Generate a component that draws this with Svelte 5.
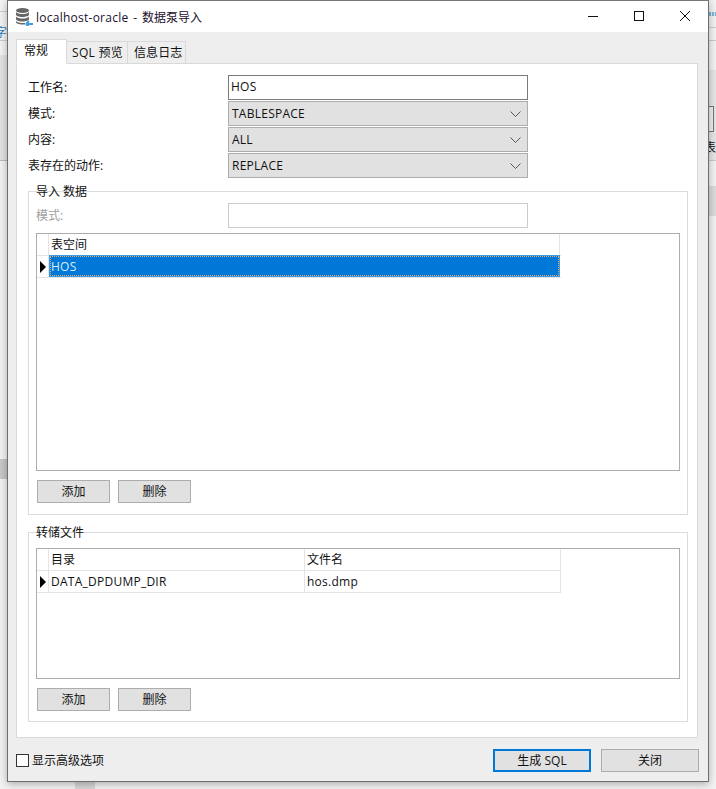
<script lang="ts">
  const options = [
    { label: '模式:', value: 'TABLESPACE' },
    { label: '内容:', value: 'ALL' },
    { label: '表存在的动作:', value: 'REPLACE' },
  ];
  const tabs = ['常规', 'SQL 预览', '信息日志'];
</script>

<div class="desktop">
  <!-- bits of the app behind the dialog -->
  <div class="backdrop">
    <span class="peek left-line" style="top: 11px"></span>
    <span class="peek left-line" style="top: 40px"></span>
    <span class="peek-glyph">字</span>
    <span class="peek left-panel"></span>
    <span class="peek left-band"></span>
    <span class="peek bottom-band"></span>
    <span class="peek right-line" style="top: 27px"></span>
    <span class="peek right-line" style="top: 40px"></span>
    <span class="peek right-dots"></span>
    <span class="peek right-panel"></span>
    <span class="peek right-box"></span>
    <span class="peek-right">表</span>
    <span class="peek right-line" style="top: 160px"></span>
    <span class="peek right-band"></span>
  </div>

  <div class="window">
    <header class="titlebar">
      <svg class="app-icon" width="19" height="19" viewBox="0 0 19 19">
        <ellipse cx="7.500" cy="3.500" rx="6.500" ry="2.500" fill="#666" />
        <path d="M1 5v2.500C1 9 4 10 7.500 10S14 9 14 7.500V5c-1 1.500-3.500 2-6.500 2S2 6.500 1 5z" fill="#666" />
        <path d="M1 9.500V12c0 1.500 3 2.500 6.500 2.500S14 13.500 14 12V9.500c-1 1.500-3.500 2-6.500 2S2 11 1 9.500z" fill="#666" />
        <path d="M1 14v1c0 1.500 3 2.500 6.500 2.500H10v-1.500c-4 .2-7.500-.5-9-2z" fill="#666" />
        <path d="M11 17h7M11 17l3-3M11 17l3 3" stroke="#3d9be0" stroke-width="2" fill="none" />
      </svg>
      <span class="title"><span class="latin">localhost-oracle -</span> 数据泵导入</span>
      <div class="controls">
        <svg width="12" height="12" viewBox="0 0 12 12"><path d="M1 6.500h10" stroke="#111" /></svg>
        <svg width="12" height="12" viewBox="0 0 12 12"><rect x="1.500" y="1.500" width="9" height="9" fill="none" stroke="#111" /></svg>
        <svg width="12" height="12" viewBox="0 0 12 12"><path d="M1 1l10 10M11 1L1 11" stroke="#111" /></svg>
      </div>
    </header>

    <div class="body">
      <div class="tabs">
        {#each tabs as tab, i}
          <div class="tab" class:active={i === 0}>{tab}</div>
        {/each}
      </div>

      <section class="panel">
        <div class="form">
          <div class="row">
            <span class="label">工作名:</span>
            <div class="input latin">HOS</div>
          </div>
          {#each options as opt}
            <div class="row">
              <span class="label">{opt.label}</span>
              <div class="select">
                <span class="latin">{opt.value}</span>
                <svg width="11" height="6" viewBox="0 0 11 6"><path d="M.5.500l5 5 5-5" fill="none" stroke="#555" /></svg>
              </div>
            </div>
          {/each}
        </div>

        <fieldset class="group first">
          <legend>导入 数据</legend>
          <div class="row disabled">
            <span class="label">模式:</span>
            <div class="input off"></div>
          </div>
          <div class="grid tall">
            <div class="grid-row head">
              <div class="rowhead"></div>
              <div class="cell single">表空间</div>
            </div>
            <div class="grid-row">
              <div class="rowhead"><i class="arrow"></i></div>
              <div class="cell single selected"><span class="latin">HOS</span></div>
            </div>
          </div>
          <div class="buttons">
            <button>添加</button>
            <button>删除</button>
          </div>
        </fieldset>

        <fieldset class="group second">
          <legend>转储文件</legend>
          <div class="grid short">
            <div class="grid-row head">
              <div class="rowhead"></div>
              <div class="cell dir">目录</div>
              <div class="cell file">文件名</div>
            </div>
            <div class="grid-row">
              <div class="rowhead"><i class="arrow"></i></div>
              <div class="cell dir latin">DATA_DPDUMP_DIR</div>
              <div class="cell file latin">hos.dmp</div>
            </div>
          </div>
          <div class="buttons">
            <button>添加</button>
            <button>删除</button>
          </div>
        </fieldset>
      </section>

      <footer class="footer">
        <label class="check"><i class="box"></i>显示高级选项</label>
        <div class="actions">
          <button class="wide primary">生成 SQL</button>
          <button class="wide">关闭</button>
        </div>
      </footer>
    </div>
  </div>
</div>

<style>
  :global(body) {
    margin: 0;
    font-family: "Open Sans", "Noto Sans CJK SC", sans-serif;
    font-size: 12px;
    color: #111;
  }

  .latin {
    letter-spacing: 0.25px;
  }

  .desktop {
    position: relative;
    width: 716px;
    height: 789px;
    overflow: hidden;
    background: #f3f3f3;
  }

  .backdrop {
    position: absolute;
    inset: 0;
  }

  .peek {
    position: absolute;
  }

  .left-line {
    left: 0;
    width: 7px;
    height: 1px;
    background: #ccc;
  }

  .left-panel {
    left: 0;
    top: 55px;
    width: 7px;
    height: 106px;
    background: #e4e4e4;
    border-bottom: 1px solid #bbb;
    box-sizing: border-box;
  }

  .left-band {
    left: 0;
    top: 459px;
    width: 7px;
    height: 20px;
    background: #c8c8c8;
  }

  .bottom-band {
    left: 75px;
    top: 780px;
    width: 20px;
    height: 9px;
    background: #d8d8d8;
  }

  .right-line {
    left: 708px;
    width: 8px;
    height: 1px;
    background: #ccc;
  }

  .right-dots {
    left: 709px;
    top: 12px;
    width: 7px;
    height: 4px;
    background: repeating-linear-gradient(90deg, #7db4dc 0 2px, #e8e8e8 2px 3px);
  }

  .right-panel {
    left: 708px;
    top: 70px;
    width: 8px;
    height: 90px;
    background: #e6e6e6;
  }

  .right-box {
    left: 708px;
    top: 106px;
    width: 6px;
    height: 26px;
    box-sizing: border-box;
    border: 1px solid #777;
    border-left: 0;
    background: #f0f0f0;
  }

  .right-band {
    left: 708px;
    top: 186px;
    width: 8px;
    height: 30px;
    background: #dcdcdc;
  }

  .peek-glyph {
    position: absolute;
    left: -5px;
    top: 23px;
    color: #2a7fc0;
  }

  .peek-right {
    position: absolute;
    left: 704px;
    top: 138px;
  }

  .window {
    position: relative;
    box-sizing: border-box;
    width: 702px;
    height: 782px;
    margin-left: 7px;
    border: 1px solid #6e6e6e;
    border-top-color: #777;
    background: #eee;
    box-shadow: 0 2px 8px rgba(0, 0, 0, 0.3);
    display: flex;
    flex-direction: column;
  }

  .titlebar {
    height: 31px;
    flex: none;
    background: #fff;
    display: flex;
    align-items: center;
    padding-left: 7px;
    box-sizing: border-box;
  }

  .app-icon {
    margin-right: 2px;
    margin-top: -1px;
  }

  .title {
    font-size: 12px;
    color: #1c0f2e;
    word-spacing: 1.500px;
  }

  .controls {
    margin-left: auto;
    display: flex;
    gap: 34px;
    padding-right: 17px;
    margin-top: -1px;
  }

  .body {
    flex: 1;
    padding: 7px 10px 0 8px;
    display: flex;
    flex-direction: column;
    min-height: 0;
  }

  .tabs {
    display: flex;
    align-items: flex-end;
    height: 25px;
    margin-bottom: -1px;
    position: relative;
    z-index: 1;
  }

  .tab {
    box-sizing: border-box;
    width: 58px;
    height: 23px;
    padding: 0 5px;
    line-height: 21px;
    letter-spacing: 0.1px;
    white-space: nowrap;
    border: 1px solid #d9d9d9;
    border-left: 0;
    border-bottom-color: #d9d9d9;
    background: #eee;
  }

  .tab:nth-child(2) {
    width: 61px;
    letter-spacing: 0.3px;
  }

  .tab:nth-child(3) {
    padding-left: 6px;
  }

  .tab.active {
    width: 51px;
    height: 25px;
    padding-left: 7px;
    border-left: 1px solid #d9d9d9;
    border-bottom-color: #fff;
    background: #fff;
    line-height: 21px;
  }

  .panel {
    box-sizing: border-box;
    width: 682px;
    height: 675px;
    background: #fff;
    border: 1px solid #d9d9d9;
    padding: 11px 9px 0 11px;
  }

  .form {
    display: flex;
    flex-direction: column;
    gap: 1px;
  }

  .row {
    display: flex;
    align-items: center;
    height: 25px;
  }

  .label {
    width: 200px;
    flex: none;
    padding-bottom: 2px;
  }

  .input,
  .select {
    box-sizing: border-box;
    width: 300px;
    height: 25px;
    padding-left: 2px;
    line-height: 21px;
  }

  .input {
    border: 1px solid #7a7a7a;
    background: #fff;
  }

  .select {
    display: flex;
    align-items: center;
    justify-content: space-between;
    padding: 0 3px 0 3px;
    border: 1px solid #adadad;
    background: #e1e1e1;
  }

  .select svg {
    margin-right: 3px;
  }

  .group {
    margin: 13px 0 0;
    padding: 0 7px 0 7px;
    box-sizing: border-box;
    width: 660px;
    border: 1px solid #dcdcdc;
    position: relative;
  }

  .group.first {
    height: 324px;
    padding-top: 11px;
  }

  .group.second {
    margin-top: 17px;
    height: 190px;
    padding-top: 15px;
  }

  legend {
    position: absolute;
    top: -9px;
    left: 7px;
    padding: 0;
    line-height: 17px;
  }

  .disabled {
    height: 25px;
    color: #a0a0a0;
    margin-bottom: 5px;
  }

  .disabled .label {
    width: 192px;
  }

  .input.off {
    border-color: #ccc;
  }

  .grid {
    box-sizing: border-box;
    width: 644px;
    border: 1px solid #adadad;
    background: #fff;
  }

  .grid.tall {
    height: 238px;
  }

  .grid.short {
    height: 131px;
  }

  .grid-row {
    display: flex;
    height: 22px;
    box-sizing: border-box;
    border-bottom: 1px solid #e4e4e4;
    width: 524px;
  }

  .rowhead {
    width: 12px;
    flex: none;
    box-sizing: border-box;
    border-right: 1px solid #e4e4e4;
    display: flex;
    align-items: center;
    justify-content: flex-end;
    padding-right: 2px;
  }

  .arrow {
    width: 0;
    height: 0;
    border-left: 6px solid #000;
    border-top: 6px solid transparent;
    border-bottom: 6px solid transparent;
  }

  .cell {
    box-sizing: border-box;
    padding-left: 2px;
    line-height: 21px;
    border-right: 1px solid #e4e4e4;
    white-space: nowrap;
  }

  .cell.single {
    width: 511px;
  }

  .cell.dir {
    width: 256px;
  }

  .cell.file {
    width: 256px;
  }

  .cell.selected {
    background: #0078d7;
    color: #d8ebfa;
    padding: 0;
    border: 1px solid #3a9be6;
    height: 22px;
    margin-top: -1px;
  }

  .cell.selected span {
    display: block;
    height: 20px;
    line-height: 19px;
    padding-left: 0;
    border: 1px dotted #e8a860;
    box-sizing: border-box;
  }

  .buttons {
    display: flex;
    gap: 8px;
    padding: 9px 0 0 1px;
  }

  button {
    box-sizing: border-box;
    width: 73px;
    height: 23px;
    padding: 0 0 2px;
    font: inherit;
    color: #111;
    background: #e1e1e1;
    border: 1px solid #adadad;
    border-radius: 0;
  }

  .footer {
    display: flex;
    align-items: center;
    justify-content: space-between;
    height: 24px;
    margin-top: 10px;
  }

  .check {
    display: flex;
    align-items: center;
    gap: 3px;
  }

  .box {
    flex: none;
    box-sizing: border-box;
    width: 13px;
    height: 13px;
    border: 1px solid #333;
    background: #fff;
  }

  .actions {
    display: flex;
    gap: 10px;
    margin-right: -1px;
  }

  button.wide {
    width: 98px;
    padding: 0;
  }

  button.primary {
    border: 2px solid #0078d7;
  }
</style>
